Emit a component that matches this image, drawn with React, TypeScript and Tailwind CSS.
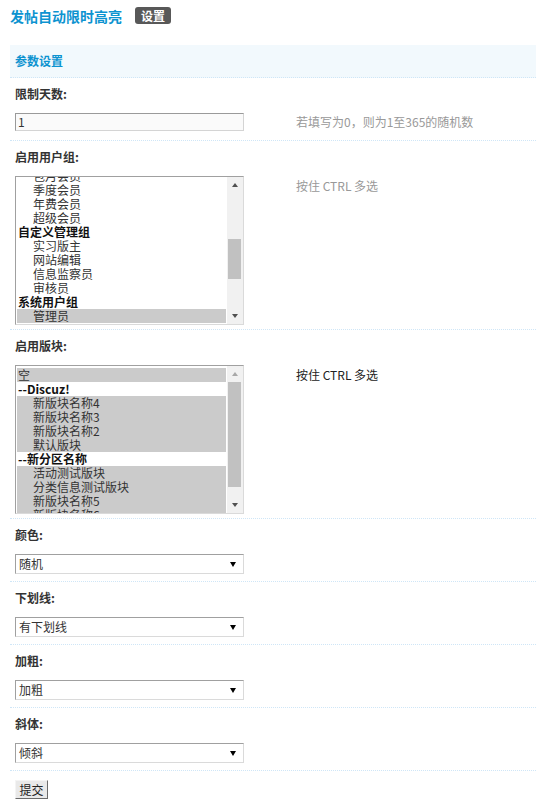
type Option = { label: string; group?: boolean; selected?: boolean; indent?: boolean }

const USER_GROUPS: Option[] = [
  { label: '包月会员', indent: true },
  { label: '季度会员', indent: true },
  { label: '年费会员', indent: true },
  { label: '超级会员', indent: true },
  { label: '自定义管理组', group: true },
  { label: '实习版主', indent: true },
  { label: '网站编辑', indent: true },
  { label: '信息监察员', indent: true },
  { label: '审核员', indent: true },
  { label: '系统用户组', group: true },
  { label: '管理员', indent: true, selected: true },
]

const FORUMS: Option[] = [
  { label: '空', selected: true },
  { label: '--Discuz!', group: true },
  { label: '新版块名称4', indent: true, selected: true },
  { label: '新版块名称3', indent: true, selected: true },
  { label: '新版块名称2', indent: true, selected: true },
  { label: '默认版块', indent: true, selected: true },
  { label: '--新分区名称', group: true },
  { label: '活动测试版块', indent: true, selected: true },
  { label: '分类信息测试版块', indent: true, selected: true },
  { label: '新版块名称5', indent: true, selected: true },
  { label: '新版块名称6', indent: true, selected: true },
]

function Label({ children }: { children: React.ReactNode }) {
  return <div className="pl-[5px] pt-[7px] font-bold leading-[18px] text-[#333]">{children}</div>
}

function Scrollbar({ thumbClass, upDisabled }: { thumbClass: string; upDisabled?: boolean }) {
  return (
    <div className="flex w-[16px] flex-col bg-[#f1f1f1]">
      <div className="flex h-[16px] items-center justify-center">
        <span className={`h-0 w-0 border-x-[3px] border-b-[4px] border-x-transparent ${upDisabled ? 'border-b-[#a8a8a8]' : 'border-b-[#505050]'}`} />
      </div>
      <div className="flex-1">
        <div className={`ml-[1px] w-[13px] bg-[#c1c1c1] ${thumbClass}`} />
      </div>
      <div className="flex h-[16px] items-center justify-center">
        <span className="h-0 w-0 border-x-[3px] border-t-[4px] border-x-transparent border-t-[#505050]" />
      </div>
    </div>
  )
}

function ListBox({ options, listClass, thumbClass, upDisabled }: {
  options: Option[]
  listClass: string
  thumbClass: string
  upDisabled?: boolean
}) {
  return (
    <div className="flex h-[149px] w-[229px] border border-[#a0a0a0] border-r-[#dadada] border-b-[#dadada] bg-white">
      <div className="w-[211px] overflow-hidden px-[1px]">
        <div className={listClass}>
          {options.map(o => (
            <div
              key={o.label}
              className={`h-[14px] whitespace-nowrap leading-[14px] ${o.indent ? 'pl-[16px]' : 'pl-[1px]'} ${o.group ? 'font-bold text-[#111]' : 'text-[#333]'} ${o.selected ? 'bg-[#cbcbcb]' : ''}`}
            >
              {o.label}
            </div>
          ))}
        </div>
      </div>
      <Scrollbar thumbClass={thumbClass} upDisabled={upDisabled} />
    </div>
  )
}

function Dropdown({ value }: { value: string }) {
  return (
    <div className="flex h-[20px] w-[229px] items-center justify-between border border-[#a0a0a0] border-r-[#dadada] border-b-[#dadada] bg-white pl-[3px] pr-[7px]">
      <span className="leading-[18px] text-[#333]">{value}</span>
      <span className="h-0 w-0 border-x-[3px] border-t-[5px] border-x-transparent border-t-black" />
    </div>
  )
}

function SelectRow({ label, value }: { label: string; value: string }) {
  return (
    <>
      <Label>{label}</Label>
      <div className="border-b border-dotted border-[#cfe6f7] pl-[5px] pt-[10px] pb-[7px]">
        <Dropdown value={value} />
      </div>
    </>
  )
}

export default function App() {
  return (
    <div className="min-h-[801px] overflow-hidden bg-white font-['Noto_Sans_CJK_SC',sans-serif] text-[12px] text-[#333]">
      <div className="flex h-[31px] items-center pl-[10px]">
        <h3 className="text-[14px] font-bold leading-[18px] text-[#0d93d0]">发帖自动限时高亮</h3>
        <span className="ml-[13px] rounded-[3px] bg-[#585858] px-[6px] font-bold leading-[17px] text-white">设置</span>
      </div>

      <div className="ml-[10px] mt-[14px]">
        <div className="flex h-[33px] items-center border-b border-dotted border-[#cfe6f7] bg-[#f2f9fd] pl-[5px] font-bold text-[#0d93d0]">
          参数设置
        </div>

        <Label>限制天数:</Label>
        <div className="grid grid-cols-[281px_1fr] items-center border-b border-dotted border-[#cfe6f7] pl-[5px] pt-[10px] pb-[9px]">
          <div className="flex h-[18px] w-[229px] items-center border border-[#9a9a9a] border-r-[#d4d4d4] border-b-[#d4d4d4] bg-[#fafafa] pl-[2px] leading-[16px]">
            1
          </div>
          <span className="leading-[18px] text-[#999]">若填写为0，则为1至365的随机数</span>
        </div>

        <Label>启用用户组:</Label>
        <div className="grid grid-cols-[281px_1fr] items-start border-b border-dotted border-[#cfe6f7] pl-[5px] pt-[10px] pb-[4px]">
          <ListBox options={USER_GROUPS} listClass="-mt-[8px]" thumbClass="mt-[46px] h-[40px]" />
          <span className="pt-[1px] leading-[18px] text-[#999]">按住 CTRL 多选</span>
        </div>

        <Label>启用版块:</Label>
        <div className="grid grid-cols-[281px_1fr] items-start border-b border-dotted border-[#cfe6f7] pl-[5px] pt-[10px] pb-[4px]">
          <ListBox options={FORUMS} listClass="mt-[2px]" thumbClass="h-[105px]" upDisabled />
          <span className="pt-[1px] leading-[18px] text-[#222]">按住 CTRL 多选</span>
        </div>

        <SelectRow label="颜色:" value="随机" />
        <SelectRow label="下划线:" value="有下划线" />
        <SelectRow label="加粗:" value="加粗" />
        <SelectRow label="斜体:" value="倾斜" />

        <div className="pl-[5px] pt-[9px]">
          <button className="h-[19px] w-[33px] border border-[#f4f4f4] border-r-[#6b6b6b] border-b-[#6b6b6b] bg-[#e9e9e9] text-[12px] leading-[16px] text-[#222]">
            提交
          </button>
        </div>
      </div>
    </div>
  )
}
